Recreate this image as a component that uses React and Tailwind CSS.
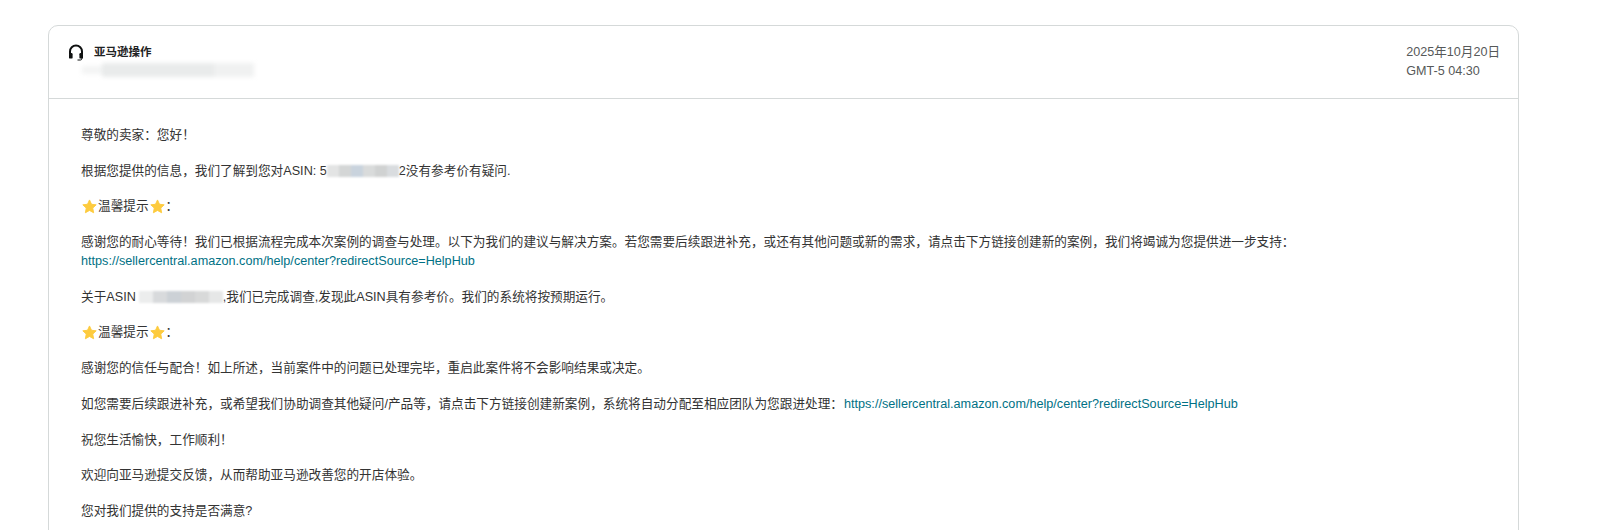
const FONT = "font-['Liberation_Sans','Noto_Sans_CJK_SC',sans-serif]";

function Headset() {
  return (
    <svg width="16" height="17" viewBox="0 0 16 17" fill="none" className="shrink-0">
      <path d="M2 10V7.5a6 6 0 0 1 12 0V10" stroke="#0f1111" strokeWidth="2" />
      <rect x="1" y="9" width="3.6" height="5.6" rx="1.2" fill="#0f1111" />
      <rect x="11.4" y="9" width="3.6" height="5.6" rx="1.2" fill="#0f1111" />
      <path d="M13.8 14v.6a1.4 1.4 0 0 1-1.4 1.4H9.5" stroke="#0f1111" strokeWidth="1" />
    </svg>
  );
}

function Star() {
  return (
    <svg width="15" height="15" viewBox="0 0 24 24" className="inline-block align-[-2px]">
      <path
        d="M12 1.5l3.2 6.9 7.5.9-5.5 5.2 1.4 7.5L12 18.3l-6.6 3.7 1.4-7.5L1.3 9.3l7.5-.9z"
        fill="#fdcb3e"
        stroke="#fdcb3e"
        strokeLinejoin="round"
        strokeWidth="1.5"
      />
    </svg>
  );
}

// pixelated blur patches over the masked ASIN numbers
function Mosaic({ width, colors, className }) {
  return (
    <span className={`inline-flex h-[12px] align-[-2px] blur-[1px] ${className}`} style={{ width }}>
      {colors.map((c, i) => (
        <span key={i} className="h-full flex-1" style={{ background: c }} />
      ))}
    </span>
  );
}

function Tip() {
  return (
    <p className="flex items-center gap-px pl-[1px]">
      <Star />
      <span>温馨提示</span>
      <Star />
      <span>：</span>
    </p>
  );
}

const LINK = 'https://sellercentral.amazon.com/help/center?redirectSource=HelpHub';

export default function App() {
  return (
    <div className={`h-[530px] overflow-hidden bg-white pt-[25px] pl-[48px] ${FONT}`}>
      <div className="h-[600px] w-[1471px] rounded-t-[10px] border border-[#d5d9d9]">
        <div className="flex h-[73px] items-start justify-between border-b border-[#d5d9d9] pt-[17px] pr-[18px] pl-[19px]">
          <div>
            <div className="flex items-center gap-[10px]">
              <Headset />
              <span className="text-[11.5px] leading-[18px] font-bold text-[#1f2324]">亚马逊操作</span>
            </div>
            <div className="mt-[2px] ml-[14px] flex h-[14px] w-[172px] blur-[2px]">
              <span className="h-[8px] w-[20px] self-center bg-[#f3f4f4]" />
              <span className="h-full w-[112px] bg-[#e9ebeb]" />
              <span className="h-full w-[40px] bg-[#f0f1f1]" />
            </div>
          </div>
          <div className="text-[12.6px] leading-[19px] text-[#565959]">
            <div>2025年10月20日</div>
            <div>GMT-5 04:30</div>
          </div>
        </div>

        <div className="space-y-[16.8px] pt-[27px] pl-[32px] text-[12.65px] leading-[18.9px] text-[#333333]">
          <p>尊敬的卖家：您好！</p>
          <p>
            根据您提供的信息，我们了解到您对ASIN: 5
            <Mosaic width={72} colors={['#e3e4e4', '#d4d6d6', '#c9d3dd', '#d9dbdb', '#d0d2d2', '#d9dcdf']} />
            2没有参考价有疑问.
          </p>
          <Tip />
          <p>
            感谢您的耐心等待！我们已根据流程完成本次案例的调查与处理。以下为我们的建议与解决方案。若您需要后续跟进补充，或还有其他问题或新的需求，请点击下方链接创建新的案例，我们将竭诚为您提供进一步支持：
            <br />
            <a className="text-[#007185]">{LINK}</a>
          </p>
          <p>
            关于ASIN
            <Mosaic width={84} className="ml-[3px]" colors={['#eceded', '#d8dadc', '#ccd1d6', '#d2d3d4', '#d8d9d9', '#e6e7e7']} />
            ,我们已完成调查,发现此ASIN具有参考价。我们的系统将按预期运行。
          </p>
          <Tip />
          <p>感谢您的信任与配合！如上所述，当前案件中的问题已处理完毕，重启此案件将不会影响结果或决定。</p>
          <p>
            如您需要后续跟进补充，或希望我们协助调查其他疑问/产品等，请点击下方链接创建新案例，系统将自动分配至相应团队为您跟进处理：
            <a className="ml-[1px] text-[#007185]">{LINK}</a>
          </p>
          <p>祝您生活愉快，工作顺利！</p>
          <p>欢迎向亚马逊提交反馈，从而帮助亚马逊改善您的开店体验。</p>
          <p>您对我们提供的支持是否满意?</p>
        </div>
      </div>
    </div>
  );
}
